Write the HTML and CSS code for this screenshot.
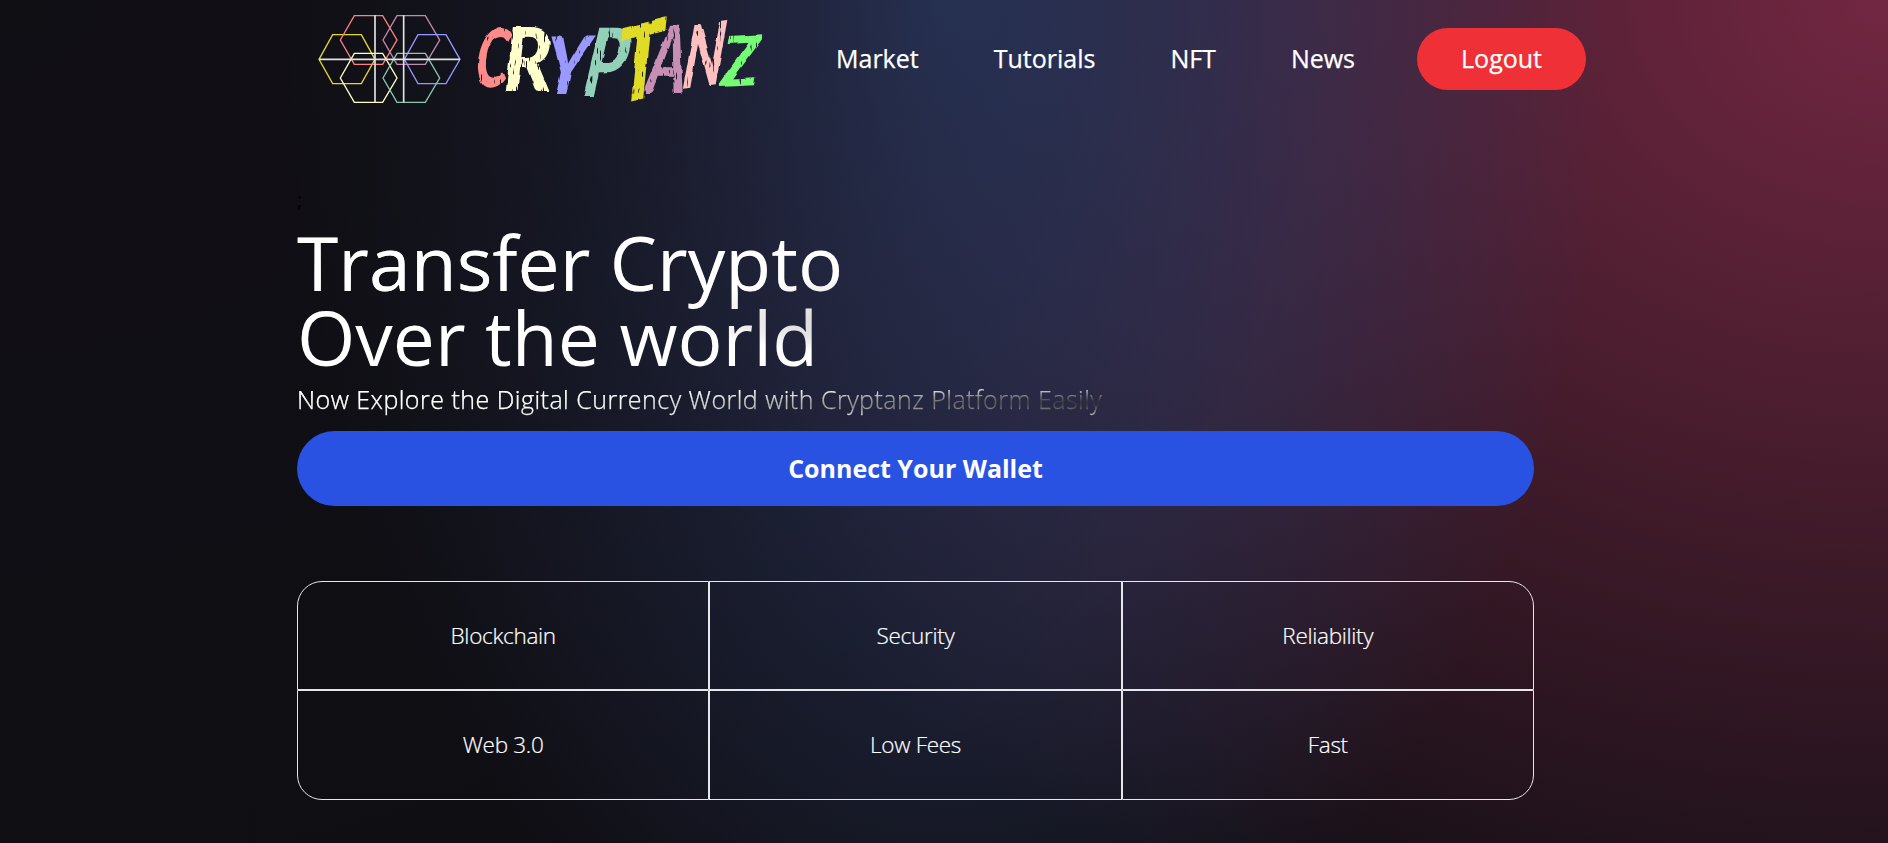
FILE: index.html
```html
<!DOCTYPE html>
<html lang="en">
<head>
<meta charset="utf-8">
<title>Cryptanz</title>
<link rel="stylesheet" href="styles.css">
</head>
<body>
<div class="page">
  <header class="header">
    <svg class="logo" viewBox="0 0 480 118" role="img" aria-label="Cryptanz">
      <defs>
        <!-- dry brush: rough edges with thin streaks missing from the paint -->
        <filter id="brush" x="-5%" y="-10%" width="110%" height="120%">
          <feTurbulence type="fractalNoise" baseFrequency=".07" numOctaves="2" seed="4" result="wobble"/>
          <feDisplacementMap in="SourceGraphic" in2="wobble" scale="3.5" xChannelSelector="R" yChannelSelector="G" result="rough"/>
          <feTurbulence type="fractalNoise" baseFrequency=".45 .07" numOctaves="2" seed="9"/>
          <feColorMatrix values="0 0 0 0 0  0 0 0 0 0  0 0 0 0 0  0 0 0 14 -9.6" result="streaks"/>
          <feComposite in="rough" in2="streaks" operator="out"/>
        </filter>
      </defs>
      <g class="mark" transform="scale(.33333)">
        <path stroke="#e0db28" d="M57 178 98 104H184L225 178 184 251H98Z"/>
        <path stroke="#ff8080" d="M121 120 163 47H248L291 120 248 193H163Z"/>
        <path stroke="#c48bb0" d="M249 120 291 47H376L419 120 376 193H291Z"/>
        <path stroke="#9696ff" d="M313 178 354 104H438L480 178 438 251H354Z"/>
        <path stroke="#ffffc8" d="M121 234 163 160H248L291 234 248 307H163Z"/>
        <path stroke="#8ac6b0" d="M249 234 291 160H376L419 234 376 307H291Z"/>
        <path class="axis" d="M225 46V307M311 46V307M57 178H480"/>
      </g>
      <g class="wordmark" filter="url(#brush)">
        <text fill="#ff8a8a" transform="translate(174 87) skewX(-5) scale(.64 1)" font-size="82">C</text>
        <text fill="#ffffcc" transform="translate(203 91) scale(.92 1)" font-size="88">R</text>
        <text fill="#9999ff" transform="translate(242 95) skewX(-6) scale(.86 1)" font-size="82">Y</text>
        <text fill="#93d0b8" transform="translate(281 96) skewX(-8) scale(.76 1)" font-size="94">P</text>
        <text fill="#e0db28" transform="translate(317 105) skewY(-14) scale(.8 1)" font-size="104">T</text>
        <text fill="#c88fb5" transform="translate(345 93) skewX(-6) scale(.64 1)" font-size="94">A</text>
        <text fill="#ffc0c0" transform="translate(381 89) skewY(-8) skewX(-6) scale(.66 1)" font-size="86">N</text>
        <text fill="#74fc74" transform="translate(420 87) skewX(-6) rotate(-3) scale(.98 1)" font-size="70">Z</text>
      </g>
    </svg>
    <nav class="nav">
      <a class="nav-link">Market</a>
      <a class="nav-link">Tutorials</a>
      <a class="nav-link">NFT</a>
      <a class="nav-link">News</a>
      <a class="nav-link logout">Logout</a>
    </nav>
  </header>
  <main class="hero">
    <div class="stray">;</div>
    <h1 class="title text-gradient">Transfer Crypto<br>Over the world</h1>
    <p class="subtitle text-gradient">Now Explore the Digital Currency World with Cryptanz Platform Easily</p>
    <button class="connect" type="button">Connect Your Wallet</button>
    <div class="features">
      <div class="feature">Blockchain</div>
      <div class="feature">Security</div>
      <div class="feature">Reliability</div>
      <div class="feature">Web 3.0</div>
      <div class="feature">Low Fees</div>
      <div class="feature">Fast</div>
    </div>
  </main>
</div>
</body>
</html>
```
FILE: styles.css
```css
* { box-sizing: border-box; }
body {
  margin: 0;
  font-family: "Open Sans", sans-serif;
}
.page {
  height: 843px;
  background-color: #0f0e13;
  background-image:
    radial-gradient(at 0% 0%, hsl(253 16% 7%) 0, transparent 50%),
    radial-gradient(at 50% 0%, hsl(225 39% 30%) 0, transparent 50%),
    radial-gradient(at 100% 0%, hsl(339 49% 30%) 0, transparent 50%);
  background-size: 100% 1500px;
}
.header {
  display: flex;
  align-items: center;
  height: 118px;
  padding-left: 300px;
}
.logo { display: block; width: 480px; height: 118px; flex: none; overflow: visible; }
.mark { fill: none; stroke-width: 4; }
.axis { stroke: #e2e2e2; stroke-width: 5; }
.wordmark { font-family: Lato, sans-serif; font-weight: 900; font-style: italic; }
.nav { display: flex; align-items: center; margin-left: 56px; gap: 75px; }
.nav-link {
  font-size: 25px;
  font-weight: 500;
  line-height: 36px;
  color: #fff;
  -webkit-text-stroke: .25px #fff;
}
.logout {
  margin-left: -13px;
  padding: 12px 44px 14px;
  border-radius: 40px;
  background: #f03037;
}
.nav-link:not(.logout) { padding-bottom: 2px; }
.hero { width: 1237px; padding-top: 63px; margin-left: 297px; }
.stray { font-size: 20px; line-height: 38px; color: #000; }
.text-gradient {
  background-color: #fff;
  background-image:
    radial-gradient(at 4% 36%, #fff 0, transparent 53%),
    radial-gradient(at 100% 60%, #000 0, transparent 50%);
  -webkit-background-clip: text;
  background-clip: text;
  color: transparent;
}
.title {
  margin: 6px 0 0;
  font-size: 75px;
  font-weight: 400;
  line-height: 75px;
}
.subtitle {
  width: 75%;
  margin: 4px 0 0;
  font-size: 25px;
  font-weight: 300;
  line-height: 40px;
  letter-spacing: .48px;
  -webkit-text-stroke: .25px transparent;
}
.connect {
  display: block;
  width: 100%;
  height: 75px;
  margin-top: 12px;
  border: 0;
  border-radius: 38px;
  background: #2952e3;
  color: #fff;
  font: 700 25px/35px "Open Sans", sans-serif;
}
.features {
  display: grid;
  grid-template-columns: repeat(3, 1fr);
  grid-template-rows: 109px 110px;
  margin-top: 75px;
  color: #fff;
}
.feature {
  display: flex;
  align-items: center;
  justify-content: center;
  border: 1px solid #e5e7eb;
  font-size: 22.5px;
  font-weight: 300;
  letter-spacing: -.3px;
  -webkit-text-stroke: .2px #fff;
}
.feature:nth-child(n+4) { padding-bottom: 1px; }
.feature:nth-child(1) { border-top-left-radius: 25px; }
.feature:nth-child(3) { border-top-right-radius: 25px; }
.feature:nth-child(4) { border-bottom-left-radius: 25px; }
.feature:nth-child(6) { border-bottom-right-radius: 25px; }
```
